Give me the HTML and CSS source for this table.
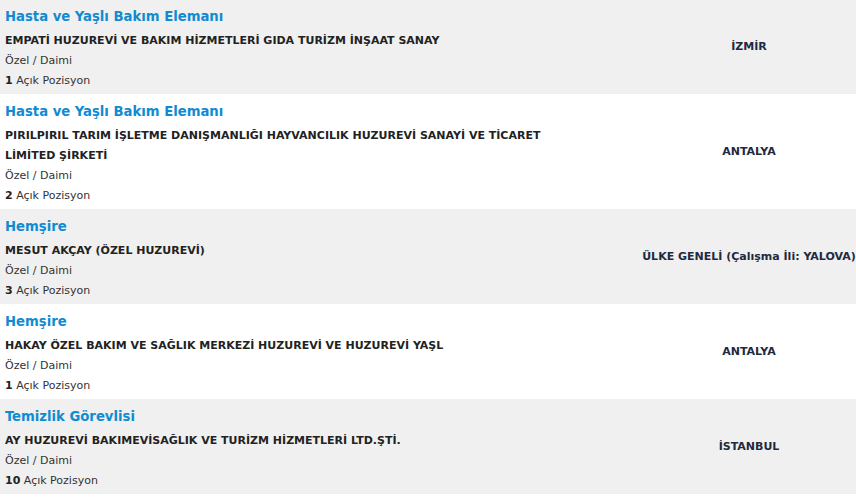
FILE: index.html
```html
<!DOCTYPE html>
<html lang="tr">
<head>
<meta charset="utf-8">
<title>İlanlar</title>
<link rel="stylesheet" href="styles.css">
</head>
<body>
<div class="list">
  <div class="row alt">
    <div class="info">
      <div class="title">Hasta ve Yaşlı Bakım Elemanı</div>
      <div class="company">EMPATİ HUZUREVİ VE BAKIM HİZMETLERİ GIDA TURİZM İNŞAAT SANAY</div>
      <div class="meta">Özel / Daimi</div>
      <div class="meta"><b>1</b> Açık Pozisyon</div>
    </div>
    <div class="loc">İZMİR</div>
  </div>
  <div class="row">
    <div class="info">
      <div class="title">Hasta ve Yaşlı Bakım Elemanı</div>
      <div class="company">PIRILPIRIL TARIM İŞLETME DANIŞMANLIĞI HAYVANCILIK HUZUREVİ SANAYİ VE TİCARET LİMİTED ŞİRKETİ</div>
      <div class="meta">Özel / Daimi</div>
      <div class="meta"><b>2</b> Açık Pozisyon</div>
    </div>
    <div class="loc">ANTALYA</div>
  </div>
  <div class="row alt">
    <div class="info">
      <div class="title">Hemşire</div>
      <div class="company">MESUT AKÇAY (ÖZEL HUZUREVİ)</div>
      <div class="meta">Özel / Daimi</div>
      <div class="meta"><b>3</b> Açık Pozisyon</div>
    </div>
    <div class="loc">ÜLKE GENELİ (Çalışma İli: YALOVA)</div>
  </div>
  <div class="row">
    <div class="info">
      <div class="title">Hemşire</div>
      <div class="company">HAKAY ÖZEL BAKIM VE SAĞLIK MERKEZİ HUZUREVİ VE HUZUREVİ YAŞL</div>
      <div class="meta">Özel / Daimi</div>
      <div class="meta"><b>1</b> Açık Pozisyon</div>
    </div>
    <div class="loc">ANTALYA</div>
  </div>
  <div class="row alt">
    <div class="info">
      <div class="title">Temizlik Görevlisi</div>
      <div class="company">AY HUZUREVİ BAKIMEVİSAĞLIK VE TURİZM HİZMETLERİ LTD.ŞTİ.</div>
      <div class="meta">Özel / Daimi</div>
      <div class="meta"><b>10</b> Açık Pozisyon</div>
    </div>
    <div class="loc">İSTANBUL</div>
  </div>
</div>
</body>
</html>
```
FILE: styles.css
```css
html, body {
  margin: 0;
  padding: 0;
  background: #ffffff;
}
body {
  font-family: "DejaVu Sans", Verdana, sans-serif;
  color: #333333;
  overflow: hidden;
}
.list {
  margin-top: -1px;
}
.row {
  display: grid;
  grid-template-columns: 1fr 214px;
  background: #ffffff;
}
.row.alt {
  background: #f0f0f0;
}
.info {
  padding: 7px 0 3px 5px;
}
.title {
  font-size: 14.7px;
  font-stretch: condensed;
  font-weight: bold;
  color: #108bd2;
  line-height: 20px;
  margin-bottom: 5px;
}
.company {
  font-size: 11px;
  font-weight: bold;
  color: #222222;
  line-height: 20px;
  max-width: 580px;
}
.meta {
  font-size: 11px;
  line-height: 20px;
  color: #333333;
}
.meta b {
  color: #222222;
}
.loc {
  display: flex;
  align-items: center;
  justify-content: center;
  font-size: 11px;
  font-weight: bold;
  color: #1f2940;
  white-space: nowrap;
}
```
